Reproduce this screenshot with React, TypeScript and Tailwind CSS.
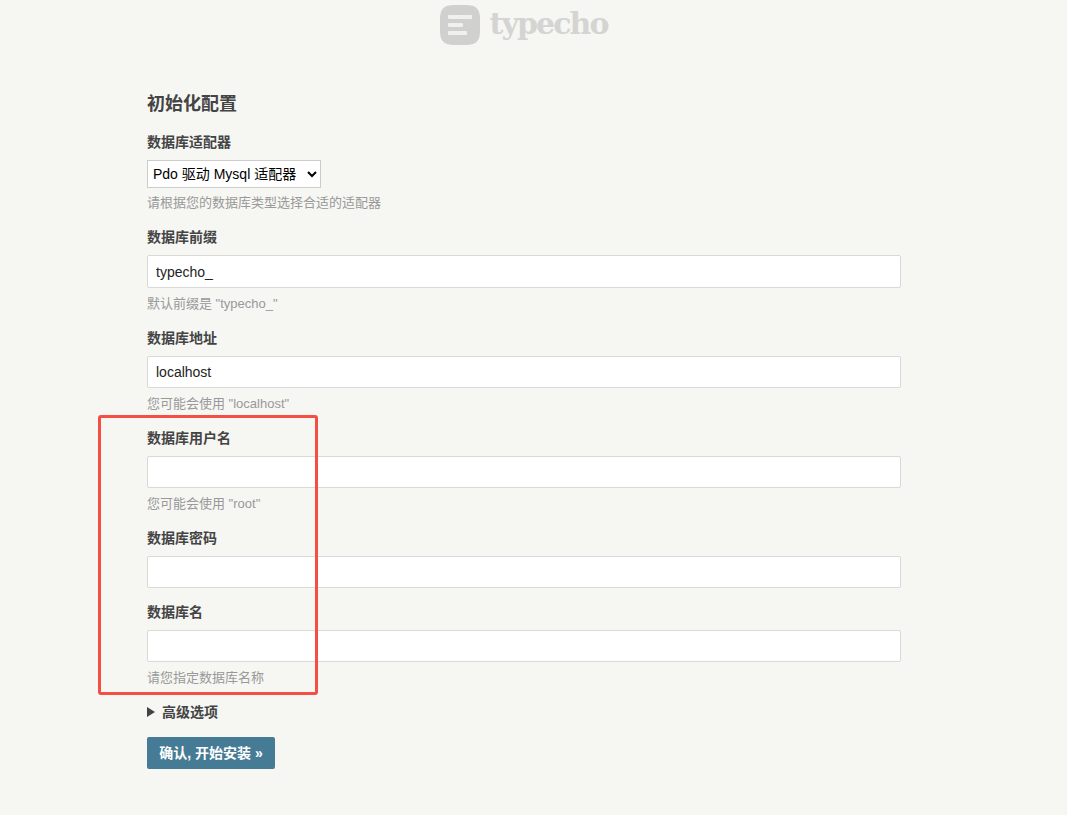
import React from 'react';

const font = "font-['Liberation_Sans','Noto_Sans_CJK_SC',sans-serif]";

const Field: React.FC<{ label: string; value?: string; hint?: string; tall?: boolean }> = ({ label, value, hint, tall }) => (
  <div className="pb-[14px]">
    <label className="block h-5 mb-2 text-sm leading-5 font-bold text-[#444]">{label}</label>
    <input
      type="text"
      readOnly
      value={value || ''}
      className={`block w-full ${tall ? 'h-[33px]' : 'h-8'} px-2 bg-white border border-[#d9d9d6] rounded-[2px] text-sm text-[#222] outline-none`}
    />
    {hint && <p className="h-5 mt-[6px] text-[13px] leading-5 text-[#999]">{hint}</p>}
  </div>
);

export default function App() {
  return (
    <div className={`relative h-[815px] overflow-hidden bg-[#f6f6f3] ${font}`}>
      {/* logo */}
      <div className="h-[50px] flex items-center justify-center pr-[19px] gap-[9px]">
        <svg width="40" height="40" viewBox="0 0 40 40">
          <path d="M14 0h12c10 0 14 4 14 14v12c0 10-4 14-14 14H14C4 40 0 36 0 26V14C0 4 4 0 14 0z" fill="#d0d0ce" />
          <rect x="8" y="10" width="24" height="4" rx="1" fill="#f0f0ee" />
          <rect x="8" y="18" width="15" height="4" rx="1" fill="#f0f0ee" />
          <rect x="8" y="26" width="19" height="4" rx="1" fill="#f0f0ee" />
        </svg>
        <span className="-mt-[3px] font-['DejaVu_Serif',serif] text-[30px] leading-10 font-bold text-[#d4d4d2] tracking-[-1.9px]">typecho</span>
      </div>

      <div className="ml-[147px] w-[754px] pt-[40px]">
        <h2 className="h-7 mb-[14px] text-lg leading-7 font-bold text-[#444]">初始化配置</h2>

        <div className="pb-[14px]">
          <label className="block h-5 mb-2 text-sm leading-5 font-bold text-[#444]">数据库适配器</label>
          <select className="block w-[174px] h-7 pl-[1px] bg-white border border-[#ccc] text-sm text-black outline-none" defaultValue="mysql">
            <option value="mysql">Pdo 驱动 Mysql 适配器</option>
          </select>
          <p className="h-5 mt-[5px] text-[13px] leading-5 text-[#999]">请根据您的数据库类型选择合适的适配器</p>
        </div>

        <Field label="数据库前缀" value="typecho_" hint={'默认前缀是 "typecho_"'} tall />
        <Field label="数据库地址" value="localhost" hint={'您可能会使用 "localhost"'} />
        <Field label="数据库用户名" hint={'您可能会使用 "root"'} />
        <Field label="数据库密码" />
        <Field label="数据库名" hint="请您指定数据库名称" />

        <div className="h-5 flex items-center text-sm font-bold text-[#444]">
          <span className="w-0 h-0 mr-[7px] border-y-[5px] border-y-transparent border-l-[8px] border-l-[#444]" />
          高级选项
        </div>

        <button className="block mt-[15px] w-32 h-8 bg-[#467b96] rounded-[2px] text-sm font-bold text-white">
          确认, 开始安装 »
        </button>
      </div>

      {/* annotation over the screenshot */}
      <div className="absolute left-[98px] top-[415px] w-[220px] h-[280px] border-[3px] border-[#f44f42] rounded-[3px]" />
    </div>
  );
}
